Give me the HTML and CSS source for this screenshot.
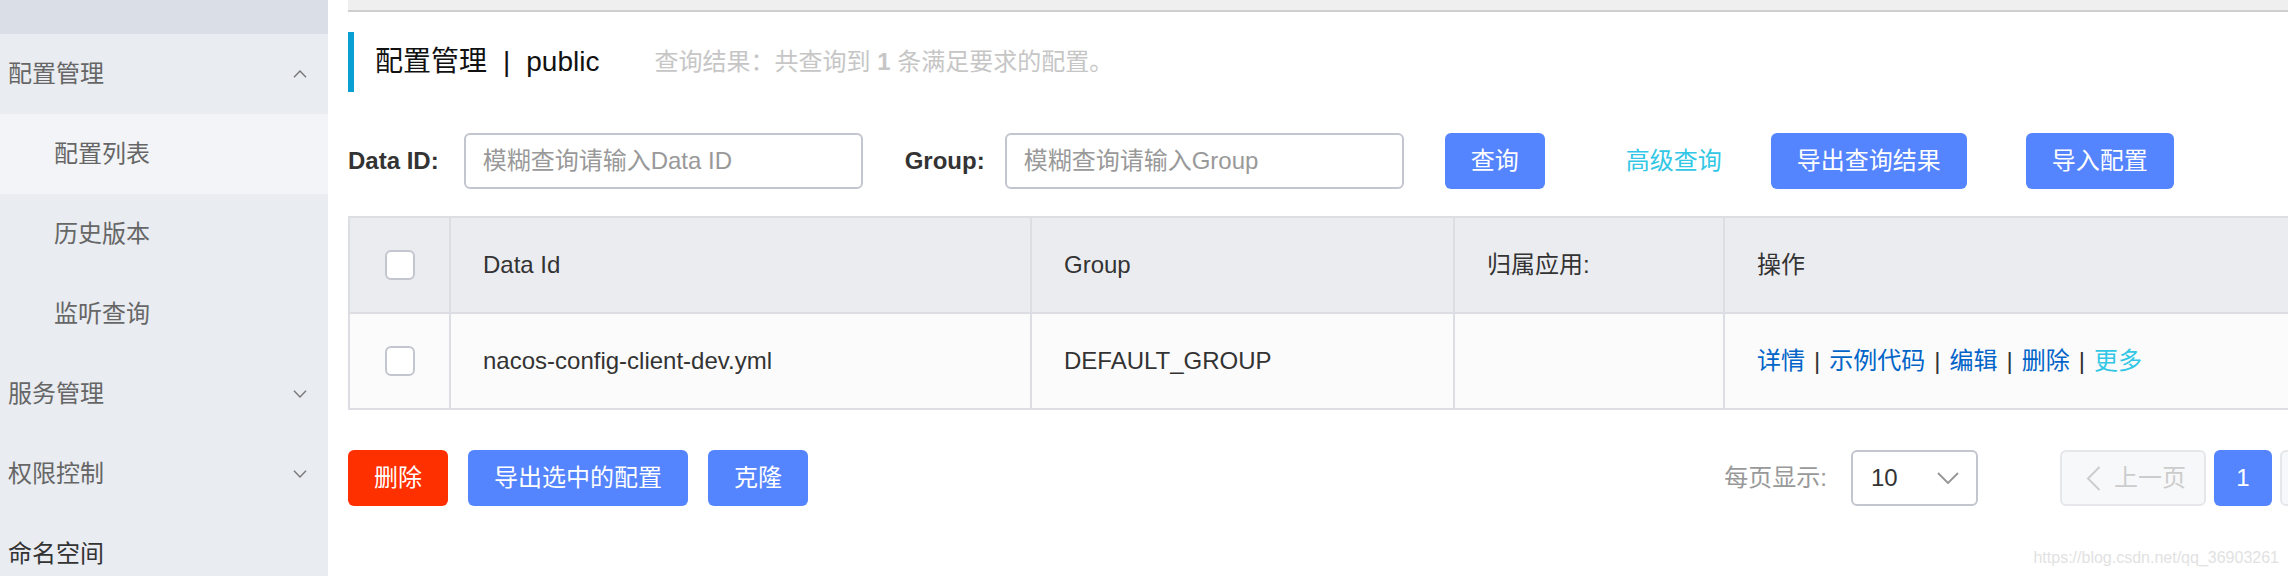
FILE: index.html
```html
<!DOCTYPE html>
<html lang="zh-CN">
<head>
<meta charset="utf-8">
<title>配置管理 - public</title>
<link rel="stylesheet" href="styles.css">
</head>
<body>
<div class="app">
  <aside class="sidebar">
    <div class="sidebar-top"></div>
    <ul class="menu">
      <li class="menu-group"><span>配置管理</span><svg class="chev" viewBox="0 0 14 8"><path d="M1 7.2 L7 1 L13 7.2"/></svg></li>
      <li class="menu-sub active">配置列表</li>
      <li class="menu-sub">历史版本</li>
      <li class="menu-sub">监听查询</li>
      <li class="menu-group"><span>服务管理</span><svg class="chev" viewBox="0 0 14 8"><path d="M1 0.8 L7 7 L13 0.8"/></svg></li>
      <li class="menu-group"><span>权限控制</span><svg class="chev" viewBox="0 0 14 8"><path d="M1 0.8 L7 7 L13 0.8"/></svg></li>
      <li class="menu-group strong"><span>命名空间</span></li>
    </ul>
  </aside>

  <main class="main">
    <div class="topstrip"></div>

    <div class="page-title">
      <span class="title">配置管理</span><span class="sep">|</span><span class="title">public</span>
      <span class="result">查询结果：共查询到 <b>1</b> 条满足要求的配置。</span>
    </div>

    <div class="search">
      <label class="label label-id">Data ID:</label>
      <input class="input" type="text" placeholder="模糊查询请输入Data ID">
      <label class="label label-group">Group:</label>
      <input class="input" type="text" placeholder="模糊查询请输入Group">
      <button class="btn btn-query">查询</button>
      <a class="adv-link">高级查询</a>
      <button class="btn btn-export">导出查询结果</button>
      <button class="btn btn-import">导入配置</button>
    </div>

    <table class="grid">
      <colgroup>
        <col class="c-check"><col class="c-id"><col class="c-group"><col class="c-app"><col class="c-op">
      </colgroup>
      <thead>
        <tr>
          <th class="cell-check"><span class="checkbox"></span></th>
          <th>Data Id</th>
          <th>Group</th>
          <th>归属应用:</th>
          <th>操作</th>
        </tr>
      </thead>
      <tbody>
        <tr>
          <td class="cell-check"><span class="checkbox"></span></td>
          <td>nacos-config-client-dev.yml</td>
          <td>DEFAULT_GROUP</td>
          <td></td>
          <td class="ops"><a class="op">详情</a><span class="bar">|</span><a class="op">示例代码</a><span class="bar">|</span><a class="op">编辑</a><span class="bar">|</span><a class="op">删除</a><span class="bar">|</span><a class="op more">更多</a></td>
        </tr>
      </tbody>
    </table>

    <div class="footer">
      <div class="batch">
        <button class="btn btn-danger">删除</button>
        <button class="btn">导出选中的配置</button>
        <button class="btn">克隆</button>
      </div>
      <div class="pager">
        <span class="page-size-label">每页显示:</span>
        <div class="select"><span>10</span><svg class="sel-chev" viewBox="0 0 22 12"><path d="M1 1 L11 11 L21 1"/></svg></div>
        <button class="page-btn disabled prev"><svg class="pg-chev" viewBox="0 0 15 25"><path d="M13.5 1 L2 12.5 L13.5 24"/></svg><span>上一页</span></button>
        <button class="page-num current">1</button>
        <button class="page-btn disabled next"><span>下一页</span><svg class="pg-chev" viewBox="0 0 15 25"><path d="M1.5 1 L13 12.5 L1.5 24"/></svg></button>
      </div>
    </div>
  </main>
</div>
<div class="watermark">https://blog.csdn.net/qq_36903261</div>
</body>
</html>
```

FILE: styles.css
```css
* { box-sizing: border-box; margin: 0; padding: 0; }

html, body {
  width: 2288px;
  height: 576px;
  overflow: hidden;
  background: #fff;
}

body {
  position: relative;
  font-family: "Liberation Sans", "Noto Sans CJK SC", sans-serif;
  font-size: 24px;
  line-height: 28px;
  color: #333;
}

.app {
  display: flex;
  height: 576px;
}

/* ---------- sidebar ---------- */
.sidebar {
  flex: none;
  width: 328px;
  background: #e9ecf1;
}

.sidebar-top {
  height: 34px;
  background: #dadee6;
}

.menu { list-style: none; }

.menu li {
  height: 80px;
  display: flex;
  align-items: center;
  color: #666;
  font-size: 24px;
  line-height: 28px;
}

.menu-group {
  justify-content: space-between;
  padding: 0 21px 0 8px;
}

.menu-sub { padding-left: 54px; }
.menu-sub.active { background: #f2f4f7; }
.menu-group.strong { color: #333; }

.chev {
  width: 14px;
  height: 8px;
  fill: none;
  stroke: #777;
  stroke-width: 1.4;
}

/* ---------- main ---------- */
.main {
  flex: none;
  width: 2078px;
  margin-left: 20px;
}

.topstrip {
  height: 12px;
  background: #efefef;
  border-bottom: 2px solid #cfcfcf;
}

.page-title {
  display: flex;
  align-items: center;
  height: 60px;
  margin-top: 20px;
  padding-left: 21px;
  border-left: 6px solid #0a9fd3;
}

.title {
  font-size: 28px;
  line-height: 32px;
  color: #111;
}

.sep {
  font-size: 28px;
  line-height: 32px;
  margin: 0 16px;
  color: #111;
}

.result {
  margin-left: 55px;
  font-size: 24px;
  color: #c6c6c6;
}

.result b { font-weight: bold; }

/* ---------- search row ---------- */
.search {
  display: flex;
  align-items: center;
  height: 56px;
  margin-top: 41px;
}

.label {
  font-weight: bold;
  color: #333;
}

.label-id { margin-right: 25px; }
.label-group { margin-left: 42px; margin-right: 20px; }

.input {
  width: 399px;
  height: 56px;
  padding-left: 17px;
  border: 2px solid #c4c6cf;
  border-radius: 6px;
  background: #fff;
  font: inherit;
  color: #333;
  outline: none;
}

.input::placeholder { color: #999; }

.btn {
  display: inline-flex;
  align-items: center;
  height: 56px;
  padding: 0 26px;
  border: none;
  border-radius: 6px;
  background: #5584ff;
  color: #fff;
  font: inherit;
}

.btn-query { margin-left: 41px; }

.adv-link {
  margin-left: 81px;
  color: #33c7e6;
}

.btn-export { margin-left: 49px; }
.btn-import { margin-left: 59px; }

/* ---------- table ---------- */
.grid {
  width: 2078px;
  margin-top: 27px;
  table-layout: fixed;
  border-collapse: collapse;
  border: 2px solid #dcdee3;
}

.c-check { width: 101px; }
.c-id { width: 581px; }
.c-group { width: 423px; }
.c-app { width: 270px; }
.c-op { width: 703px; }

.grid th,
.grid td {
  height: 96px;
  padding: 0 32px;
  border: 2px solid #dcdee3;
  text-align: left;
  font-weight: normal;
  color: #333;
  white-space: nowrap;
}

.grid th { background: #ebecf0; }
.grid td { background: #fbfbfb; }

.grid .cell-check {
  padding: 0;
  text-align: center;
}

.checkbox {
  display: inline-block;
  width: 30px;
  height: 30px;
  vertical-align: middle;
  border: 2px solid #c4c6cf;
  border-radius: 6px;
  background: #fff;
}

.op { color: #0064c8; }
.op.more { color: #33c7e6; }

.bar {
  margin: 0 9px;
  color: #333;
}

/* ---------- footer ---------- */
.footer {
  display: flex;
  align-items: center;
  height: 56px;
  margin-top: 40px;
}

.batch {
  display: flex;
  gap: 20px;
}

.btn-danger { background: #ff3000; }

.pager {
  display: flex;
  align-items: center;
  margin-left: auto;
}

.page-size-label {
  margin-right: 24px;
  color: #999;
}

.select {
  display: flex;
  align-items: center;
  justify-content: space-between;
  width: 127px;
  height: 56px;
  padding: 0 17px 0 18px;
  border: 2px solid #c4c6cf;
  border-radius: 6px;
  color: #333;
}

.sel-chev {
  width: 22px;
  height: 12px;
  fill: none;
  stroke: #999;
  stroke-width: 2;
}

.page-btn {
  display: inline-flex;
  align-items: center;
  width: 146px;
  height: 56px;
  border: 2px solid #e6e7eb;
  border-radius: 6px;
  background: #f7f8fa;
  color: #ccc;
  font: inherit;
}

.page-btn.prev {
  margin-left: 82px;
  padding: 0 18px 0 24px;
}

.page-btn.next {
  padding: 0 18px 0 26px;
}

.page-btn.prev .pg-chev { margin-right: 13px; }
.page-btn.next .pg-chev { margin-left: 13px; }

.pg-chev {
  width: 15px;
  height: 25px;
  fill: none;
  stroke: #ccc;
  stroke-width: 2;
}

.page-num {
  width: 58px;
  height: 56px;
  margin: 0 8px;
  border: none;
  border-radius: 6px;
  font: inherit;
}

.page-num.current {
  background: #5584ff;
  color: #fff;
}

/* ---------- watermark ---------- */
.watermark {
  position: absolute;
  right: 9px;
  top: 548px;
  font-size: 16px;
  line-height: 20px;
  color: #e2e2e2;
}
```
